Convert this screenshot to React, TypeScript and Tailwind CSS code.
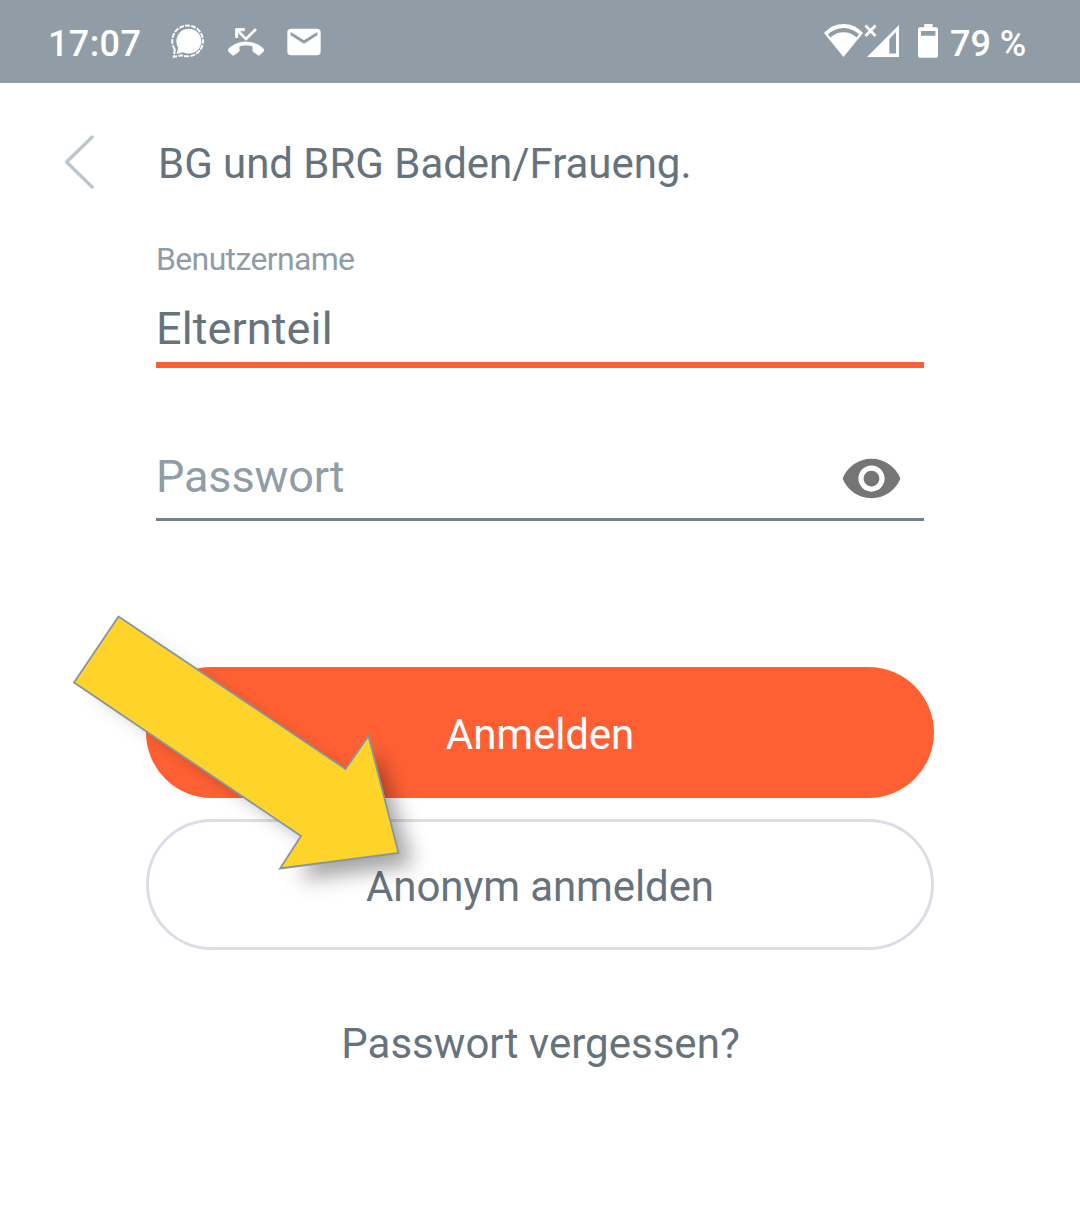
function StatusBar() {
  return (
    <header className="flex h-[83px] items-start bg-[#919da6] text-[36px] font-medium leading-[42px] text-white">
      <span className="ml-[48px] mt-[23px] w-[112px] tracking-[0.4px]">17:07</span>
      <svg className="h-[83px] w-[60px] shrink-0" viewBox="159 0 60 83" fill="none">
        <path
          d="M173.8 49.5 A15.4 15.4 0 1 1 181 55.3 L172.8 56.8 Z"
          stroke="white"
          strokeWidth="1.9"
          strokeDasharray="4.8 1.3"
        />
        <path d="M188 28.8a12.4 12.4 0 1 1-5.8 23.4l-6.7 1.9 1.8-6.3A12.4 12.4 0 0 1 188 28.8z" fill="white" />
      </svg>
      <svg className="ml-[8px] mt-[24px] size-[36px] shrink-0" viewBox="0 0 24 24" fill="white" stroke="white" strokeWidth="0.5">
        <path d="M6.5 5.5L12 11l7-7-1-1-6 6-4.5-4.5H11V3H5v6h1.5V5.5z" />
        <path d="M23.71 16.67C20.66 13.78 16.54 12 12 12 7.46 12 3.34 13.78.29 16.67c-.18.18-.29.43-.29.71s.11.53.29.71l2.48 2.48c.18.18.43.29.71.29.27 0 .52-.11.7-.28.79-.74 1.69-1.36 2.66-1.85.33-.16.56-.5.56-.9v-3.1c1.45-.48 3-.73 4.6-.73 1.6 0 3.15.25 4.6.72v3.1c0 .39.23.74.56.9.98.49 1.87 1.12 2.66 1.85.18.18.43.28.7.28.28 0 .53-.11.71-.29l2.48-2.48c.18-.18.29-.43.29-.71s-.12-.52-.3-.7z" />
      </svg>
      <svg className="ml-[20px] mt-[22px] size-[40px] shrink-0" viewBox="0 0 24 24" fill="white">
        <path d="M20 4H4c-1.1 0-1.99.9-1.99 2L2 18c0 1.1.9 2 2 2h16c1.1 0 2-.9 2-2V6c0-1.1-.9-2-2-2zm0 4l-8 5-8-5V6l8 5 8-5v2z" />
      </svg>
      <svg className="ml-auto h-[83px] w-[130px] shrink-0" viewBox="820 0 130 83" fill="none">
        <path d="M843.5 57 L824 33 Q832 24 843.5 24 T863 33 Z" fill="white" />
        <path d="M828 34.5 Q834.5 28 843.5 28 T859 34.5 L856.5 37.5 Q851 32.3 843.5 32.3 T830.5 37.5 Z" fill="#919da6" />
        <path d="M865.5 25.5l10 10.5M875.5 25.5l-10 10.5" stroke="white" strokeWidth="2.8" />
        <path fillRule="evenodd" d="M899 25V57H867zM889.3 39V53.5H896V32z" fill="white" />
        <path
          fillRule="evenodd"
          d="M924.2 27.3V24h8.4v3.3h3.4a2 2 0 0 1 2 2v26.4a2 2 0 0 1-2 2h-16a2 2 0 0 1-2-2V29.3a2 2 0 0 1 2-2zM921 31v4.7h14.4V31z"
          fill="white"
        />
      </svg>
      <span className="mr-[38px] mt-[23px] w-[92px] whitespace-nowrap">79 %</span>
    </header>
  );
}

function Arrow() {
  return (
    <svg
      className="pointer-events-none absolute left-[40px] top-[590px] h-[330px] w-[420px] overflow-visible"
      viewBox="40 590 420 330"
    >
      <defs>
        <filter id="arrow-shadow" x="-20%" y="-20%" width="150%" height="150%">
          <feGaussianBlur stdDeviation="10" />
        </filter>
      </defs>
      <path
        d="M132 638 L354 785 L378 752 L413 865 L300 880 L318 845 L98 690 Z"
        fill="black"
        fillOpacity="0.36"
        filter="url(#arrow-shadow)"
      />
      <path
        d="M118.5 616.5 L345.5 769 L368.5 736 L398.5 853 L280 868.5 L301 836 L74 682.5 Z"
        fill="#ffd42a"
        stroke="#8795a3"
        strokeWidth="1.8"
      />
    </svg>
  );
}

export default function App() {
  return (
    <div className="relative h-[1230px] w-[1080px] overflow-hidden bg-white font-[Roboto,sans-serif] text-[#66737d]">
      <StatusBar />
      <div className="flex h-[160px] items-start">
        <svg className="ml-[60px] mt-[47px] h-[64px] w-[34px] shrink-0" viewBox="60 130 34 64" fill="none">
          <path d="M92.2 137 L66.5 162 L92.2 187" stroke="#bcc7cd" strokeWidth="3.4" strokeLinejoin="round" strokeLinecap="round" />
        </svg>
        <h1 className="ml-[64px] mt-[56px] whitespace-nowrap text-[42px] font-normal leading-[50px] tracking-[-0.04px]">
          BG und BRG Baden/Fraueng.
        </h1>
      </div>
      <form className="mx-auto w-[768px]">
        <label className="block h-[58px] text-[32px] leading-[33px] tracking-[-0.65px] text-[#909ca6]">Benutzername</label>
        <div className="h-[67px] border-b-[6px] border-[#ff6033] text-[45px] leading-[56px] tracking-[0.1px]">Elternteil</div>
        <div className="mt-[80px] flex h-[73px] items-start justify-between border-b-[3px] border-[#75818b]">
          <span className="mt-[1px] text-[45px] leading-[56px] tracking-[-0.15px] text-[#909ca6]">Passwort</span>
          <svg className="mr-[21px] mt-[-1px] size-[63px]" viewBox="0 0 24 24" fill="#757575">
            <path d="M12 4.5C7 4.5 2.73 7.61 1 12c1.73 4.39 6 7.5 11 7.5s9.27-3.11 11-7.5c-1.73-4.39-6-7.5-11-7.5zM12 17c-2.76 0-5-2.24-5-5s2.24-5 5-5 5 2.24 5 5-2.24 5-5 5zm0-8c-1.66 0-3 1.34-3 3s1.34 3 3 3 3-1.34 3-3-1.34-3-3-3z" />
          </svg>
        </div>
      </form>
      <div className="mx-auto mt-[146px] flex w-[788px] flex-col items-center gap-[21px]">
        <button className="h-[131px] w-full rounded-full bg-[#ff6033] pt-[4px] text-[42px] tracking-[-0.1px] text-white">Anmelden</button>
        <button className="h-[131px] w-full rounded-full border-[3px] border-[#dcdde6] pt-[4px] text-[42px] tracking-[-0.1px]">
          Anonym anmelden
        </button>
      </div>
      <p className="mt-[69px] pl-[1px] text-center text-[42px] leading-[50px] tracking-[0.02px]">Passwort vergessen?</p>
      <Arrow />
    </div>
  );
}
